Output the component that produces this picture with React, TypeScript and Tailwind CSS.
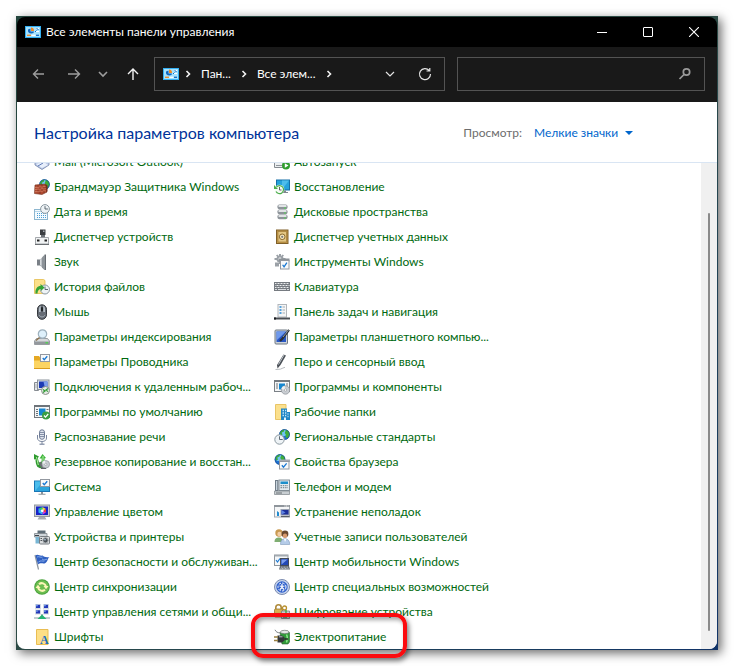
import type { ReactNode } from "react";
import { useState } from "react";

// shared bits for the small icons
const Globe = ({ cx, cy, r }: { cx: number; cy: number; r: number }) => (
  <g transform={`translate(${cx} ${cy}) scale(${r / 5})`}>
    <circle r="5" fill="#1f6fd0" />
    <circle cx="-1" cy="-1.5" r="3" fill="#6fc4f5" />
    <path d="M-4.5-1.5C-3.5-4-1-5 0-4.8l-.5 2-2 1 .5 2-1.5.8zM1.5-4.5l2.5 1.5.8 3-1.8 3.5-2-1 .2-2.5-1-1.5z" fill="#3fae3a" />
    <circle r="4.7" fill="none" stroke="#174a8c" strokeWidth=".6" />
  </g>
);

const Clock = ({ cx, cy, r }: { cx: number; cy: number; r: number }) => (
  <g>
    <circle cx={cx} cy={cy} r={r} fill="#eef3f6" stroke="#8a979f" />
    <path d={`M${cx} ${cy - r + 1.5}V${cy}H${cx + r - 1.5}`} fill="none" stroke="#4d5a63" strokeWidth=".9" />
  </g>
);

const Disc = ({ cx, cy, r }: { cx: number; cy: number; r: number }) => (
  <g>
    <circle cx={cx} cy={cy} r={r} fill="#c9cdd2" stroke="#8e9499" strokeWidth=".7" />
    <path d={`M${cx} ${cy}L${cx - r} ${cy - 1}A${r} ${r} 0 0 1 ${cx - 1} ${cy - r}z`} fill="#eef0f2" />
    <circle cx={cx} cy={cy} r={r / 3.5} fill="#fff" stroke="#8e9499" strokeWidth=".6" />
  </g>
);

const Sheet = ({ x, y, w, h }: { x: number; y: number; w: number; h: number }) => (
  <g>
    <rect x={x} y={y} width={w} height={h} fill="#f8f9fa" stroke="#9398a0" />
    <path
      d={`M${x + w / 4} ${y + h / 2}l${w / 6} ${h / 4}L${x + w - w / 4} ${y + h / 4}`}
      fill="none"
      stroke="#1a78d2"
      strokeWidth="1.3"
    />
  </g>
);

const icons: Record<string, ReactNode> = {
  mail: (
    <>
      <path d="M1 6l7-4 7 4v5l-7 4.500-7-4.500z" fill="#b9c8e6" stroke="#7384a8" strokeWidth=".8" />
      <path d="M2 10l6 4 6-3-4-3z" fill="#e8effb" />
      <path d="M4 12l5-3" stroke="#5d78b5" />
    </>
  ),
  firewall: (
    <>
      <Globe cx={10.5} cy={5.5} r={5.2} />
      <path d="M1 6l10.500-1 1.500 8-5 2.500-7.500-1z" fill="#b04a30" stroke="#74301f" strokeWidth=".6" />
      <path d="M1 8.500l11-1M1 10.500l11.500-1M1 12.700l12-1" stroke="#e3967c" strokeWidth=".6" />
      <path d="M4 6v2M8 5.500v2.200M6 8.200v2M10 8v1.700M4 10.500v2M8 10v2M6 12.500v2.500M10 12v2" stroke="#7d3322" strokeWidth=".8" />
      <path d="M11.500 5l2 1.500V12l-1.500 1.500z" fill="#7d2d1b" />
    </>
  ),
  date: (
    <>
      <rect x=".5" y="5.500" width="13" height="10" fill="#f4fafe" stroke="#8db6cf" />
      <path d="M1 7.500h12" stroke="#b7d7ea" />
      <path d="M3 9.500h9M3 11.500h9M3 13.500h9" stroke="#4b9fd6" strokeDasharray="1 1" />
      <Clock cx={11} cy={5} r={4.4} />
    </>
  ),
  device: (
    <>
      <path d="M6 .5h5.500V6H6z" fill="#3b3e42" />
      <path d="M9 1.500h1.500V3H9z" fill="#a7adb3" />
      <path d="M7 6h4v3H7z" fill="#6d7278" />
      <path d="M1.500 8.500h13v6.500h-13z" fill="#f1f3f4" stroke="#8f9499" strokeWidth=".8" />
      <path d="M3 10.500h2.500v2H3zM10.500 10.500H13v2h-2.500z" fill="#222" />
      <path d="M1 15.500h14" stroke="#6b6f73" />
    </>
  ),
  sound: (
    <>
      <path d="M3 5.500h3v6H3z" fill="#7a8087" />
      <path d="M6 5.500L10.500 1v15L6 11.500z" fill="#b4b9be" />
      <path d="M8 3.500L10.500 1v15L8 13.500z" fill="#8d9399" />
      <path d="M10.500.5h1.500v15.500h-1.500z" fill="#666c72" />
      <path d="M6.700 6v5" stroke="#e1e4e6" />
    </>
  ),
  history: (
    <>
      <path d="M.5.500h9l1.500 1v13H.5z" fill="#fbe08a" stroke="#e3bd4e" strokeWidth=".8" />
      <Clock cx={11} cy={10.5} r={4.5} />
      <path d="M1.500 14.500c-.5-5 2-7.500 5-7.500V5l4 3.500L7 12v-2c-2 0-3.500 1.500-3.500 4.500z" fill="#35a436" />
    </>
  ),
  mouse: (
    <>
      <rect x="3.500" y=".8" width="9" height="14.500" rx="4.500" fill="#666c75" stroke="#33373c" />
      <path d="M5 8V5c0-2 1-3 1.700-3.300V8zM11 8V5c0-2-1-3-1.700-3.300V8z" fill="#b6bfc8" />
      <rect x="7" y="3" width="2" height="4.500" rx="1" fill="#1e2125" />
      <path d="M5 11c1 2.500 5 2.500 6 0" stroke="#9da7b0" fill="none" />
    </>
  ),
  indexing: (
    <>
      <path d="M2.500 9.500h11l2 2.500v3.500H.5V12z" fill="#d6d9dc" stroke="#83888d" strokeWidth=".8" />
      <path d="M1 12.500h14v2.500H1z" fill="#93989d" />
      <path d="M11.500 13.200h2.500v1.200h-2.500z" fill="#43dd43" />
      <circle cx="8.500" cy="5" r="4.200" fill="#def0fb" stroke="#9db0bd" strokeWidth="1.200" />
      <path d="M5.500 8.500L2 11.500" stroke="#8a6f4a" strokeWidth="1.300" />
    </>
  ),
  explorer: (
    <>
      <path d="M0 2h5l1.500 2H16v11H0z" fill="#e5a823" />
      <path d="M0 6.500h6L7 5h9v10H0z" fill="#fcd462" />
      <path d="M0 14h16v1H0z" fill="#d99b1c" />
      <Sheet x={6.5} y={0.5} w={9} h={7} />
    </>
  ),
  remote: (
    <>
      <path d="M.5 3.500h4v8h-4z" fill="#e4e7ea" stroke="#878c92" />
      <path d="M1 6h3M1 8h3" stroke="#9ba1a6" strokeWidth=".7" />
      <rect x="3.500" y="1" width="11.500" height="9.500" fill="#dfe4ea" stroke="#8c939b" />
      <path d="M5 2.500h8.500v6.500H5z" fill="#1d3bb4" />
      <path d="M9.500 2.500h4v6.500L10.500 7z" fill="#7d9feb" />
      <circle cx="11.500" cy="11.500" r="4" fill="#e7ebe7" stroke="#8b938b" />
      <path d="M9 10.500l2 1.500-2 1.500M14 9.500l-2 1.500 2 1.500" stroke="#2f9a34" strokeWidth="1.200" fill="none" />
    </>
  ),
  defaults: (
    <>
      <rect x=".5" y="1.500" width="15" height="12" fill="#f4f5f6" stroke="#71777d" />
      <path d="M0 1h16v2H0z" fill="#6d7379" />
      <path d="M2 5.500h2M2 7.500h2M2 9.500h2M2 11.500h2M12.500 5.500h2" stroke="#6e7479" />
      <path d="M5 4.500h6.500v7H5z" fill="#1687d0" />
      <circle cx="12" cy="11.500" r="4" fill="#3a9e42" />
      <path d="M10 11.500l1.500 1.700 2.700-3.200" stroke="#fff" strokeWidth="1.200" fill="none" />
    </>
  ),
  mic: (
    <>
      <rect x="5.500" y=".8" width="5" height="9.500" rx="2.500" fill="#dfe4ee" stroke="#6d7a94" />
      <path d="M5.500 3.500h5M5.500 5.500h5M5.500 7.500h5" stroke="#6d7a94" strokeWidth=".8" />
      <path d="M3.500 6v3c0 2 1.500 3.500 4.500 3.500S12.500 11 12.500 9V6M8 12.500V15" stroke="#7c88a0" fill="none" />
      <path d="M5.500 15.200h5" stroke="#7c88a0" strokeWidth="1.200" />
    </>
  ),
  backup: (
    <>
      <path d="M3 9l6-2 5 3-2 5-7-1z" fill="#6b7073" />
      <path d="M0 0l5 2.500L3.800 4l2 7.500 2.200 3-4.500-1.500C2 11 1.500 8 1.500 5L0 5.500z" fill="#2f9a2f" />
      <path d="M5.500 4.500l3-4.500L12 4l-1.500.5L11 10.500l-3.500-1 .2-5z" fill="#3cb33a" />
      <path d="M2.500 3l1.800 8M9 2v6" stroke="#b2efa3" strokeWidth="1" fill="none" />
      <Disc cx={11.8} cy={10.3} r={3.8} />
      <path d="M7 14.500h5" stroke="#5d6266" />
    </>
  ),
  system: (
    <>
      <path d="M0 1.500h16V13H0z" fill="#1976b5" />
      <path d="M1 2.500h14V12H1z" fill="#2da4dc" />
      <path d="M1 12L9 2.500H1z" fill="#4bbdec" />
      <path d="M7 13h2v2H7zM4.500 14.800h7v1h-7z" fill="#8b9299" />
      <Sheet x={6.5} y={0.5} w={9} h={7} />
    </>
  ),
  color: (
    <>
      <rect x=".5" y="1" width="15" height="11.500" fill="#c9cdd2" stroke="#9298a0" />
      <path d="M2 2.500h12V11H2z" fill="#1824c8" />
      <path d="M4.500 4.500L8.500 3v4z" fill="#2bd36b" />
      <path d="M8.500 3L12 5 8.500 7z" fill="#f5e13c" />
      <path d="M12 5v3.500L8.500 7z" fill="#f0443a" />
      <path d="M12 8.500l-3.500 2V7z" fill="#e63ad2" />
      <path d="M4.500 4.500v4L8.500 7zM4.500 8.500l4 2V7z" fill="#35b5f5" />
      <circle cx="8.300" cy="6.800" r="1.400" fill="#fff" />
      <path d="M5 13h6l1.500 2.500h-9z" fill="#a7adb3" />
    </>
  ),
  printers: (
    <>
      <path d="M3.500 1.500h8v4h-8z" fill="#5f6e79" />
      <path d="M.5 4.500H13v3.500H.5z" fill="#cfd6db" stroke="#7d858c" strokeWidth=".8" />
      <path d="M1 6.500h4" stroke="#3b4248" />
      <path d="M1.500 8H5v6.500H1.500z" fill="#79b6d4" />
      <rect x="5.500" y="7.500" width="10" height="7.500" rx="1" fill="#d9dcde" stroke="#777d82" />
      <circle cx="11.500" cy="11.300" r="2.600" fill="#4a5056" stroke="#9ea5aa" />
      <circle cx="11" cy="10.700" r=".8" fill="#b9d5ee" />
      <path d="M6.500 9.500h1.500M6.500 11.500h1.500" stroke="#4e555a" />
    </>
  ),
  flag: (
    <>
      <path d="M1 1l3.500 14.500" stroke="#8a939d" strokeWidth="1.200" />
      <path d="M1.500 1.500c2-2 4.500.8 7 0 1.500 1.500 3.500 2 7 1.500-2 1-1.500 4.500-4 6-2.500 1.500-4.500-1-7.500 1.500z" fill="#2f5fc0" />
      <path d="M3 3c2-1 4 1 5.500 0M8 5c2 1.500 4 .8 5 0M4.500 8c2-2 4-.5 6-1" stroke="#8fb3f2" strokeWidth=".9" fill="none" />
    </>
  ),
  sync: (
    <>
      <circle cx="8" cy="8" r="7.800" fill="#49a33c" />
      <circle cx="8" cy="8" r="6.800" fill="#6cbd50" />
      <path d="M5 5.200A4.300 4.300 0 0 1 12 7.500" stroke="#fdf6b8" strokeWidth="2" fill="none" />
      <path d="M11 10.800A4.300 4.300 0 0 1 4 8.500" stroke="#fdf6b8" strokeWidth="2" fill="none" />
      <path d="M9.500 7h5L12 10.200zM6.500 9h-5L4 5.800z" fill="#fdf6b8" />
    </>
  ),
  network: (
    <>
      {[
        [1, 0],
        [9, 0],
        [1, 5.5],
        [9, 5.5],
      ].map(([x, y]) => (
        <g key={`${x}-${y}`}>
          <rect x={x} y={y} width="6" height="5" fill="#d3dae2" />
          <rect x={x + 1} y={y + 0.8} width="4" height="3.200" fill="#2338b8" />
          <rect x={x + 1} y={y + 0.8} width="1.800" height="1.500" fill="#6f96ea" />
        </g>
      ))}
      <path d="M7.300 10h1.400v3H7.300z" fill="#8fa0a8" />
      <path d="M0 13h16v2H0z" fill="#c3cdd2" />
      <path d="M8 10.500l4.500 4.500h-9z" fill="#27b374" />
    </>
  ),
  fonts: (
    <>
      <path d="M2.500.5H14v15H2.500z" fill="#fddf86" stroke="#e9bd52" />
      <path d="M11 15.500h3V6z" fill="#f5c95c" />
      <text x="6" y="15" fontSize="12" fontFamily="Liberation Serif, serif" fontWeight="700" fill="#1a6fc4">
        A
      </text>
    </>
  ),
  autoplay: (
    <>
      <path d="M.5 3.500h12v10H.5z" fill="#eceff1" stroke="#858b91" />
      <path d="M2 11.500h6" stroke="#8e949a" />
      <circle cx="12" cy="11.500" r="4" fill="#2f9d2f" />
      <path d="M10.800 9.200l3.700 2.300-3.700 2.300z" fill="#fff" />
    </>
  ),
  recovery: (
    <>
      <path d="M2 .5h14v11H2z" fill="#176fa6" />
      <path d="M3 1.500h12v9H3z" fill="#25a3dc" />
      <path d="M8 1.500h7l-7 9z" fill="#4dbdec" />
      <path d="M9 11.500h3V13H9zM8 13h6v1H8z" fill="#80878e" />
      <circle cx="5.500" cy="10.500" r="4.800" fill="#f6fbf5" />
      <path d="M2.500 8a4 4 0 1 1-.5 4.500" stroke="#4cae4c" strokeWidth="1.200" fill="none" />
      <path d="M0 6v4h4z" fill="#4cae4c" />
      <path d="M5.500 8v3h2" stroke="#555" strokeWidth=".9" fill="none" />
    </>
  ),
  storage: (
    <>
      {[0.5, 5.5, 10.5].map((y) => (
        <g key={y}>
          <rect x="3.500" y={y} width="10" height="4.700" rx="1.800" fill="#8e949a" />
          <rect x="4.300" y={y + 0.4} width="8.400" height="2" rx="1" fill="#e1e4e6" />
          <path d={`M10 ${y + 3.5}h2`} stroke="#4cde4c" strokeWidth=".9" />
        </g>
      ))}
    </>
  ),
  vault: (
    <>
      <rect x="2.500" y="1" width="11.500" height="13.500" fill="#c39a4b" stroke="#80602a" />
      <rect x="4" y="2.500" width="8.500" height="10.500" fill="#e3c684" stroke="#a17c38" strokeWidth=".7" />
      <circle cx="8.200" cy="7.800" r="2.800" fill="#f5e6bc" stroke="#8a6a2e" />
      <circle cx="8.200" cy="7.800" r="1.100" fill="#7b7d80" />
    </>
  ),
  tools: (
    <>
      <g fill="#9ba1a7">
        <circle cx="6" cy="5" r="3.500" />
        <path d="M5 0h2v3H5zM5 7h2v3H5zM.5 4h3v2h-3zM8.500 4h3v2h-3zM2 1.500l1.400-1 2 2.300-1.400 1zM10 1.500l-1.400-1-2 2.300 1.400 1z" />
        <path d="M1 8.500h4v4H1z" />
      </g>
      <circle cx="6" cy="5" r="1.400" fill="#fff" />
      <path d="M5 4.500h10.500v3H5z" fill="#8b9197" />
      <Sheet x={6.5} y={6.5} w={8.500} h={8.500} />
    </>
  ),
  keyboard: (
    <>
      <rect y="3" width="16" height="9" fill="#767b81" />
      <path d="M1 4.500h14M1 8.500h14" stroke="#eceeef" strokeDasharray="1 .5" />
      <path d="M1.500 6.500h14" stroke="#eceeef" strokeDasharray="1 .5" />
      <path d="M1 10.500h2M4 10.500h8M13 10.500h2" stroke="#d9dcdf" />
    </>
  ),
  taskbar: (
    <>
      <rect x="4" y=".5" width="8.500" height="12.500" fill="#f5f6f7" stroke="#b1b6bb" />
      <path d="M5.500 3h2M5.500 6h2M5.500 9h2" stroke="#1f86d4" strokeWidth="1.400" />
      <path d="M8.500 3H11M8.500 6H11M8.500 9H11" stroke="#a5abb0" />
      <path d="M0 13.500h16V15.500H0z" fill="#4a4f54" />
      <path d="M0 13.500h2v2H0z" fill="#1a1c1f" />
    </>
  ),
  tablet: (
    <>
      <rect x="1" y="1" width="12.500" height="14" rx="1" fill="#cdd3da" stroke="#6f7882" />
      <path d="M2.500 2.500h9.500V13H2.500z" fill="#2756c4" />
      <path d="M2.500 2.500H12L3 11z" fill="#6e99ec" />
      <path d="M15 .8L8.500 9.500 6 12" stroke="#2b3036" strokeWidth="2.200" />
      <path d="M14.500 1L9 8" stroke="#a7afb7" strokeWidth=".8" />
    </>
  ),
  pen: (
    <>
      <path d="M9.500.5L12 1.500 6.500 11 3.500 14.500 3 11z" fill="#4a4f56" />
      <path d="M10 1L4.500 10.500" stroke="#c3c9cf" strokeWidth="1" />
      <path d="M1.500 15.500c2-.5 3 .2 5-.4s3-1.600 4.500-1.800" stroke="#b9bdc1" fill="none" />
    </>
  ),
  programs: (
    <>
      <rect x=".5" y="1.500" width="15" height="11" fill="#f5f6f7" stroke="#7a8086" />
      <path d="M0 1h16v2H0z" fill="#747a80" />
      <path d="M2 5h2M2 7h2M2 9h2M12 5h2M12 7h2" stroke="#6e7479" />
      <path d="M5 4.500h6v6H5z" fill="#1687d0" />
      <Disc cx={11.5} cy={11} r={4.2} />
    </>
  ),
  folders: (
    <>
      <path d="M1.500.5h10.500v15H1.500z" fill="#fbe08d" stroke="#e9c566" />
      <path d="M7 4.500h6V8h3v8H7z" fill="#2186c4" />
      <path d="M8.500 6.500H10M11 6.500h1.300M8.500 9H10M11 9h1.300M8.500 11.500H10M11 11.500h1.300M13.500 10h1M13.500 12.500h1" stroke="#bfe6fb" strokeWidth="1.300" />
      <path d="M10 13.500h2V16h-2z" fill="#e6f6ff" />
    </>
  ),
  region: (
    <>
      <Globe cx={10.5} cy={5.5} r={5.3} />
      <Clock cx={5.5} cy={10.5} r={4.7} />
    </>
  ),
  browser: (
    <>
      <Globe cx={6} cy={5.5} r={5.3} />
      <path d="M5 5.500h11V8H5z" fill="#a3a9b0" />
      <Sheet x={5.5} y={7.5} w={9.5} h={7.5} />
    </>
  ),
  phone: (
    <>
      <path d="M1 1h3.500v11H1z" fill="#707c87" />
      <path d="M2 2h1.300v9H2z" fill="#c8d4dd" />
      <rect x="5" y="1" width="10.500" height="10.500" fill="#e2eaef" stroke="#7b8892" strokeWidth=".9" />
      <path d="M6.500 2.500h7.500V5H6.500z" fill="#1b8ecb" />
      <path d="M6.500 6.700h7.500M6.500 8.700h7.500" stroke="#6d7a84" strokeDasharray="1.500 .8" />
      <path d="M.5 12h15v3.500H.5z" fill="#c9cfd3" stroke="#7d8489" strokeWidth=".7" />
      <path d="M2 14h6" stroke="#6a7075" />
    </>
  ),
  trouble: (
    <>
      <rect x=".5" y="1.500" width="15" height="11.500" fill="#f5f6f7" stroke="#a3a8af" />
      <path d="M0 1h16v2H0z" fill="#8f959b" />
      <path d="M10.500 2h4" stroke="#fff" strokeDasharray="1 .6" />
      <path d="M3 7l2 1.500V12H3z" fill="#1f8bd0" />
      <rect x="7" y="5.500" width="8" height="5.500" fill="#1c2f9a" stroke="#9aa2b3" />
      <path d="M7.500 6l4 2.500-4 2z" fill="#5f84e3" />
      <path d="M7 12.500h8.500" stroke="#5a6066" strokeWidth="1.200" />
    </>
  ),
  users: (
    <>
      <circle cx="5" cy="4" r="3.700" fill="#c99a52" />
      <circle cx="5.500" cy="5" r="2.200" fill="#f3cda5" />
      <path d="M.5 13c0-3.500 2-4.500 4.500-4.500S9 10 9 13z" fill="#7fae72" />
      <circle cx="11" cy="5" r="3.400" fill="#6a4a30" />
      <circle cx="11" cy="6.700" r="2.200" fill="#d99b6e" />
      <path d="M6.500 15.500c0-4 2-5.700 4.500-5.700s4.700 1.700 4.700 5.700z" fill="#b4cbe8" stroke="#7e98ba" strokeWidth=".6" />
      <path d="M10 10l1 3 1.500-3z" fill="#fff" />
    </>
  ),
  mobility: (
    <>
      <rect x=".5" y="1" width="13.500" height="10.500" fill="#f4f6f8" stroke="#8f969d" />
      <path d="M.5 1h13.500v1.500H.5z" fill="#a3aab0" />
      <path d="M2 6l1.500 2L6 4.500" stroke="#1a78d2" strokeWidth="1.200" fill="none" />
      <rect x="6.500" y="4.500" width="8" height="7" fill="#2248b6" stroke="#454d5a" />
      <path d="M7.500 5.500h6l-6 5z" fill="#7d9fee" />
      <path d="M6 12h9l1 3.500H5z" fill="#666d76" />
      <path d="M7 13.200h7M6.500 14.500h8" stroke="#d9dde1" strokeWidth=".7" strokeDasharray="1 .5" />
    </>
  ),
  access: (
    <>
      <circle cx="8" cy="8" r="7.500" fill="#c7d5ee" stroke="#7c8cb0" />
      <circle cx="8" cy="8" r="5.700" fill="#2f60cc" />
      <circle cx="8" cy="8" r="4" fill="none" stroke="#fff" strokeDasharray="2.500 1.200" />
      <path d="M5.500 7l2.500.5L10.500 7M8 5v3.500l2 2M8 8.500l-2 2" stroke="#fff" strokeWidth="1.200" fill="none" />
    </>
  ),
  crypt: (
    <>
      <path d="M1.800 6V3.500a2.700 2.700 0 0 1 5.400 0V6" stroke="#b08b3c" strokeWidth="1.600" fill="none" />
      <rect x=".5" y="5" width="8" height="8" rx="1" fill="#dcb352" stroke="#9b7830" strokeWidth=".8" />
      <circle cx="10.500" cy="4" r="2" fill="none" stroke="#b88f2c" strokeWidth="1.300" />
      <path d="M7.500 7H15.500v7.500h-8z" fill="#d0d5da" stroke="#7b8187" strokeWidth=".8" />
      <path d="M12 6v8" stroke="#3aa83a" strokeWidth="1.300" />
      <path d="M9 13h2" stroke="#4d5358" />
    </>
  ),
  power: (
    <>
      <path d="M6 3.500h9.500V13l-1.500 2H8z" fill="#2f9a38" stroke="#2b5a31" strokeWidth=".6" />
      <ellipse cx="10.700" cy="3" rx="4.300" ry="1.700" fill="#e3e7e5" stroke="#6b746e" strokeWidth=".7" />
      <path d="M12.500 5.500c1 2 1 5 0 8" stroke="#8be88a" strokeWidth="1.500" fill="none" />
      <path d="M1 .8C2 3 3.500 3.800 6 3.800" stroke="#70777c" strokeWidth=".9" fill="none" />
      <path d="M3.500 6.500H8L10.500 8.500v3L8 13.500H3.500z" fill="#33373a" />
      <path d="M10.500 10H14" stroke="#222" strokeWidth="1.400" />
      <path d="M0 8h4M0 11.500h4" stroke="#9a8140" strokeWidth="1.300" />
      <path d="M5 7.800h3.500" stroke="#b4babf" />
    </>
  ),
};

const leftItems = [
  { icon: "mail", label: "Mail (Microsoft Outlook)" },
  { icon: "firewall", label: "Брандмауэр Защитника Windows" },
  { icon: "date", label: "Дата и время" },
  { icon: "device", label: "Диспетчер устройств" },
  { icon: "sound", label: "Звук" },
  { icon: "history", label: "История файлов" },
  { icon: "mouse", label: "Мышь" },
  { icon: "indexing", label: "Параметры индексирования" },
  { icon: "explorer", label: "Параметры Проводника" },
  { icon: "remote", label: "Подключения к удаленным рабоч..." },
  { icon: "defaults", label: "Программы по умолчанию" },
  { icon: "mic", label: "Распознавание речи" },
  { icon: "backup", label: "Резервное копирование и восстан..." },
  { icon: "system", label: "Система" },
  { icon: "color", label: "Управление цветом" },
  { icon: "printers", label: "Устройства и принтеры" },
  { icon: "flag", label: "Центр безопасности и обслуживан..." },
  { icon: "sync", label: "Центр синхронизации" },
  { icon: "network", label: "Центр управления сетями и общи..." },
  { icon: "fonts", label: "Шрифты" },
];

const rightItems = [
  { icon: "autoplay", label: "Автозапуск" },
  { icon: "recovery", label: "Восстановление" },
  { icon: "storage", label: "Дисковые пространства" },
  { icon: "vault", label: "Диспетчер учетных данных" },
  { icon: "tools", label: "Инструменты Windows" },
  { icon: "keyboard", label: "Клавиатура" },
  { icon: "taskbar", label: "Панель задач и навигация" },
  { icon: "tablet", label: "Параметры планшетного компью..." },
  { icon: "pen", label: "Перо и сенсорный ввод" },
  { icon: "programs", label: "Программы и компоненты" },
  { icon: "folders", label: "Рабочие папки" },
  { icon: "region", label: "Региональные стандарты" },
  { icon: "browser", label: "Свойства браузера" },
  { icon: "phone", label: "Телефон и модем" },
  { icon: "trouble", label: "Устранение неполадок" },
  { icon: "users", label: "Учетные записи пользователей" },
  { icon: "mobility", label: "Центр мобильности Windows" },
  { icon: "access", label: "Центр специальных возможностей" },
  { icon: "crypt", label: "Шифрование устройства" },
  { icon: "power", label: "Электропитание", highlighted: true },
];

type Item = { icon: string; label: string; highlighted?: boolean };

function ItemColumn({ items }: { items: Item[] }) {
  return (
    <ul className="w-60 shrink-0">
      {items.map((item) => (
        <li key={item.label} className="relative h-[25px]">
          <a href="#" className="flex h-full items-center gap-1 whitespace-nowrap text-[#00690f]">
            <svg width="16" height="16" viewBox="0 0 16 16" className="shrink-0 overflow-visible" aria-hidden="true">
              {icons[item.icon]}
            </svg>
            {item.label}
          </a>
          {item.highlighted && (
            <span className="pointer-events-none absolute -top-[11px] -left-[23px] h-[45px] w-[156px] rounded-xl border-4 border-[#fb0b0f] shadow-[2px_3px_5px_rgba(0,0,0,0.5),inset_2px_3px_4px_rgba(0,0,0,0.35)]" />
          )}
        </li>
      ))}
    </ul>
  );
}

function PanelIcon() {
  return (
    <svg width="16" height="12" viewBox="0 0 16 12" className="shrink-0" aria-hidden="true">
      <rect width="16" height="12" fill="#35b0f2" />
      <rect x="1" y="1" width="14" height="10" fill="#a5e2fd" />
      <path d="M3 3.500C2.500 6 4 7.500 6.500 7.500 8 7.500 9 6.500 9 5.500L5.500 5.500V2.500z" fill="#1267c0" />
      <path d="M6 1.500A3.300 3.300 0 0 1 9 5H6z" fill="#f08a24" />
      <path d="M11 2.500h3M11 5.500h3" stroke="#fff" strokeWidth="1.200" />
      <path d="M10 6l1.500-1.500M11.500 2.500l2 1" stroke="#1267c0" />
      <path d="M2 9.300h4" stroke="#f08a24" strokeWidth="1.300" />
      <path d="M6.500 9.300h4" stroke="#fff" strokeWidth="1.300" />
      <path d="M11 9.300h3" stroke="#1267c0" strokeWidth="1.300" />
    </svg>
  );
}

function Crumb() {
  return (
    <svg width="6" height="8" viewBox="0 0 6 8" className="shrink-0" aria-hidden="true">
      <path d="M1.500 1l3 3-3 3" fill="none" stroke="#f2f2f2" strokeWidth="1.600" />
    </svg>
  );
}

function ToolButton({ label, narrow, children }: { label: string; narrow?: boolean; children: ReactNode }) {
  return (
    <button aria-label={label} className={`flex h-8 items-center justify-center ${narrow ? "w-6" : "w-[35px]"}`}>
      <svg width="16" height="16" viewBox="0 0 16 16" fill="none" strokeWidth="1.400">
        {children}
      </svg>
    </button>
  );
}

export default function App() {
  const [query, setQuery] = useState("");
  const [view, setView] = useState("small");

  return (
    <div className="min-h-screen bg-white p-4 font-['Lato','Open_Sans',sans-serif] text-xs">
      <div className="bg-linear-to-br from-[#24453d] via-[#2c4a45] to-[#123468] p-px shadow-[3px_3px_10px_rgba(0,0,0,0.6)]">
        {/* Title bar */}
        <div className="flex h-[30px] items-center rounded-t-lg bg-black pl-2 text-white">
          <PanelIcon />
          <h1 className="ml-[5px] flex-1">Все элементы панели управления</h1>
          <button aria-label="Свернуть" className="flex h-full w-[46px] items-center justify-center">
            <svg width="10" height="10" viewBox="0 0 10 10" stroke="#fff">
              <path d="M0 5.500h10" />
            </svg>
          </button>
          <button aria-label="Развернуть" className="flex h-full w-[46px] items-center justify-center">
            <svg width="10" height="10" viewBox="0 0 10 10" stroke="#fff" fill="none">
              <rect x=".5" y=".5" width="9" height="9" rx=".5" />
            </svg>
          </button>
          <button aria-label="Закрыть" className="flex h-full w-[46px] items-center justify-center">
            <svg width="10" height="10" viewBox="0 0 10 10" stroke="#fff" strokeWidth="1.100">
              <path d="M0 0l10 10M10 0L0 10" />
            </svg>
          </button>
        </div>

        {/* Navigation */}
        <div className="flex h-[55px] items-center bg-[#191919] pr-3 pb-px pl-1 text-white">
          <ToolButton label="Назад">
            <path d="M13 8H2.500M7 3.500L2.500 8 7 12.500" stroke="#9d9d9d" />
          </ToolButton>
          <ToolButton label="Вперед">
            <path d="M2 8h11.500M9 3.500l4.500 4.500L9 12.500" stroke="#9d9d9d" />
          </ToolButton>
          <ToolButton label="Последние расположения" narrow>
            <path d="M4 6l4 4 4-4" stroke="#9d9d9d" strokeWidth="1.600" />
          </ToolButton>
          <ToolButton label="Вверх">
            <path d="M8 14V3M3 8l5-5 5 5" stroke="#f2f2f2" />
          </ToolButton>
          <div className="ml-1 flex h-[34px] flex-1 items-center border border-[#535353] pr-0.5 pl-2">
            <PanelIcon />
            <div className="ml-1.5 flex flex-1 items-center gap-2.5 whitespace-nowrap">
              <Crumb />
              <a href="#">Пан...</a>
              <Crumb />
              <a href="#">Все элем...</a>
              <Crumb />
            </div>
            <ToolButton label="Предыдущие расположения">
              <path d="M4 6l4 4 4-4" stroke="#e4e4e4" strokeWidth="1.200" />
            </ToolButton>
            <ToolButton label="Обновить">
              <path d="M12.200 4.500A5.500 5.500 0 1 0 13.500 8M12.800 2v3H9.500" stroke="#e4e4e4" strokeWidth="1.200" />
            </ToolButton>
          </div>
          <div className="ml-3 flex h-[34px] w-62 items-center border border-[#535353] pr-3">
            <input
              type="search"
              aria-label="Поиск"
              value={query}
              onChange={(e) => setQuery(e.target.value)}
              className="min-w-0 flex-1 bg-transparent outline-none"
            />
            <svg width="14" height="14" viewBox="0 0 14 14" fill="none" stroke="#9a9a9a" aria-hidden="true">
              <circle cx="8.500" cy="5" r="3.200" strokeWidth="1.700" />
              <path d="M6 7.500L1.500 12" strokeWidth="1.700" />
            </svg>
          </div>
        </div>

        {/* Heading covers the scrolled part of the list */}
        <div className="relative z-10 flex h-[61px] items-center border-b border-[#d9e5f3] bg-white pt-0.5 pr-[84px] pl-[17px]">
          <h2 className="flex-1 text-base text-[#003399]">Настройка параметров компьютера</h2>
          <label htmlFor="view" className="text-[#6d6d6d]">
            Просмотр:
          </label>
          <div className="relative ml-3">
            <select
              id="view"
              value={view}
              onChange={(e) => setView(e.target.value)}
              className="w-[99px] appearance-none bg-transparent text-[#0066cc] outline-none"
            >
              <option value="small">Мелкие значки</option>
              <option value="large">Крупные значки</option>
              <option value="category">Категория</option>
            </select>
            <svg
              width="8"
              height="4"
              viewBox="0 0 8 4"
              className="pointer-events-none absolute top-1.5 right-0"
              aria-hidden="true"
            >
              <path d="M0 0h8L4 4z" fill="#0066cc" />
            </svg>
          </div>
        </div>

        {/* Items */}
        <div className="flex rounded-b-lg bg-white">
          <div className="-mt-[14px] flex flex-1 pl-[17px]">
            <ItemColumn items={leftItems} />
            <ItemColumn items={rightItems} />
          </div>
          <div className="flex w-4 justify-center rounded-br-lg bg-[#f0f0f0] pt-[50px] pb-[18px]">
            <div className="w-0.5 rounded-full bg-[#8a8a8a]" />
          </div>
        </div>
      </div>
    </div>
  );
}
